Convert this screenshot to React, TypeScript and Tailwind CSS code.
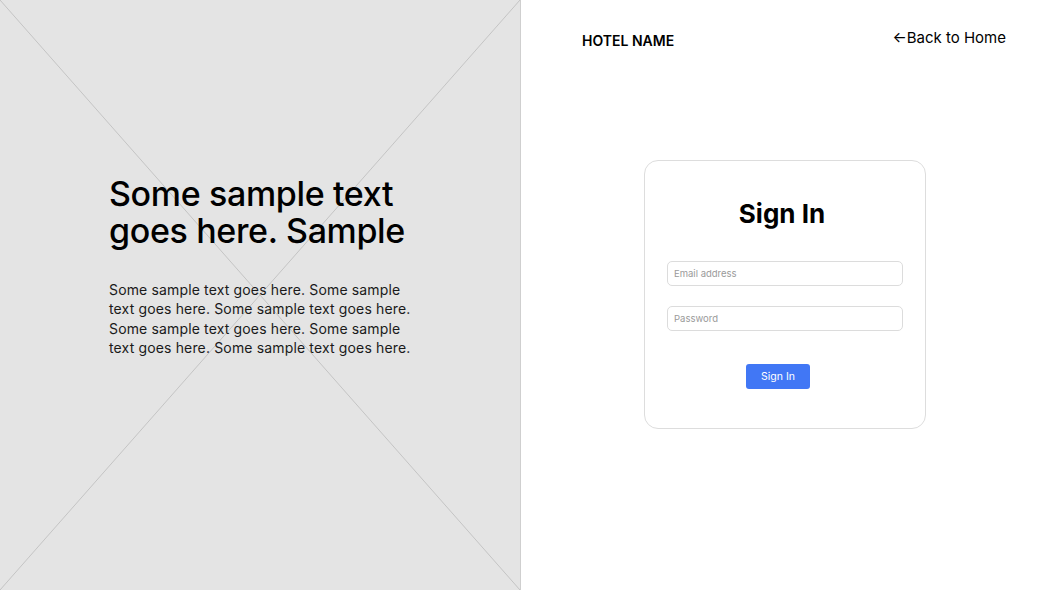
export default function App() {
  return (
    <div className="flex h-[590px] w-[1040px] bg-white text-black" style={{ fontFamily: "Inter, 'Noto Sans', sans-serif" }}>
      {/* left: image placeholder with hero copy */}
      <div className="relative h-full w-[521px] shrink-0 border-r border-[#cfcfcf] bg-[#e4e4e4] pl-[109px] pt-[175px]">
        <svg className="absolute inset-0 h-full w-full" viewBox="0 0 520 590" preserveAspectRatio="none">
          <line x1="0" y1="0" x2="520" y2="590" stroke="#c4c4c4" strokeWidth="1" />
          <line x1="520" y1="0" x2="0" y2="590" stroke="#c4c4c4" strokeWidth="1" />
        </svg>
        <div className="relative">
          <h1 className="text-[34px] font-medium leading-[37px] tracking-[-0.35px]">
            Some sample text
            <br />
            goes here. Sample
          </h1>
          <p className="mt-[31px] text-[14px] leading-[19.4px] tracking-[0.15px] text-[#1a1a1a]">
            Some sample text goes here. Some sample
            <br />
            text goes here. Some sample text goes here.
            <br />
            Some sample text goes here. Some sample
            <br />
            text goes here. Some sample text goes here.
          </p>
        </div>
      </div>

      {/* right: header + sign in card */}
      <div className="flex flex-1 flex-col">
        <div className="flex items-start justify-between pl-[61px] pr-[34px] pt-[30px]">
          <div className="text-[14px] font-semibold">HOTEL NAME</div>
          <a href="#" className="text-[15px] leading-[16px]">
            ←Back to Home
          </a>
        </div>
        <div className="flex flex-1 justify-center pl-[9px] pt-[109px]">
          <div className="flex h-[269px] w-[282px] flex-col items-center rounded-[14px] border border-[#dddddd] px-[22px] pt-[38px]">
            <h2 className="-ml-[6px] text-[26px] font-bold leading-[30px]">Sign In</h2>
            <input
              placeholder="Email address"
              className="mt-[32px] h-[25px] w-full rounded-[5px] border border-[#dcdcdc] px-[6px] text-[9.5px] placeholder:text-[#9a9a9a]"
            />
            <input
              type="password"
              placeholder="Password"
              className="mt-[20px] h-[25px] w-full rounded-[5px] border border-[#dcdcdc] px-[6px] text-[9.5px] placeholder:text-[#9a9a9a]"
            />
            <button className="ml-[79px] mt-[33px] h-[25px] w-[64px] self-start rounded-[3px] bg-[#4177f5] text-[10.5px] text-white">
              Sign In
            </button>
          </div>
        </div>
      </div>
    </div>
  );
}
